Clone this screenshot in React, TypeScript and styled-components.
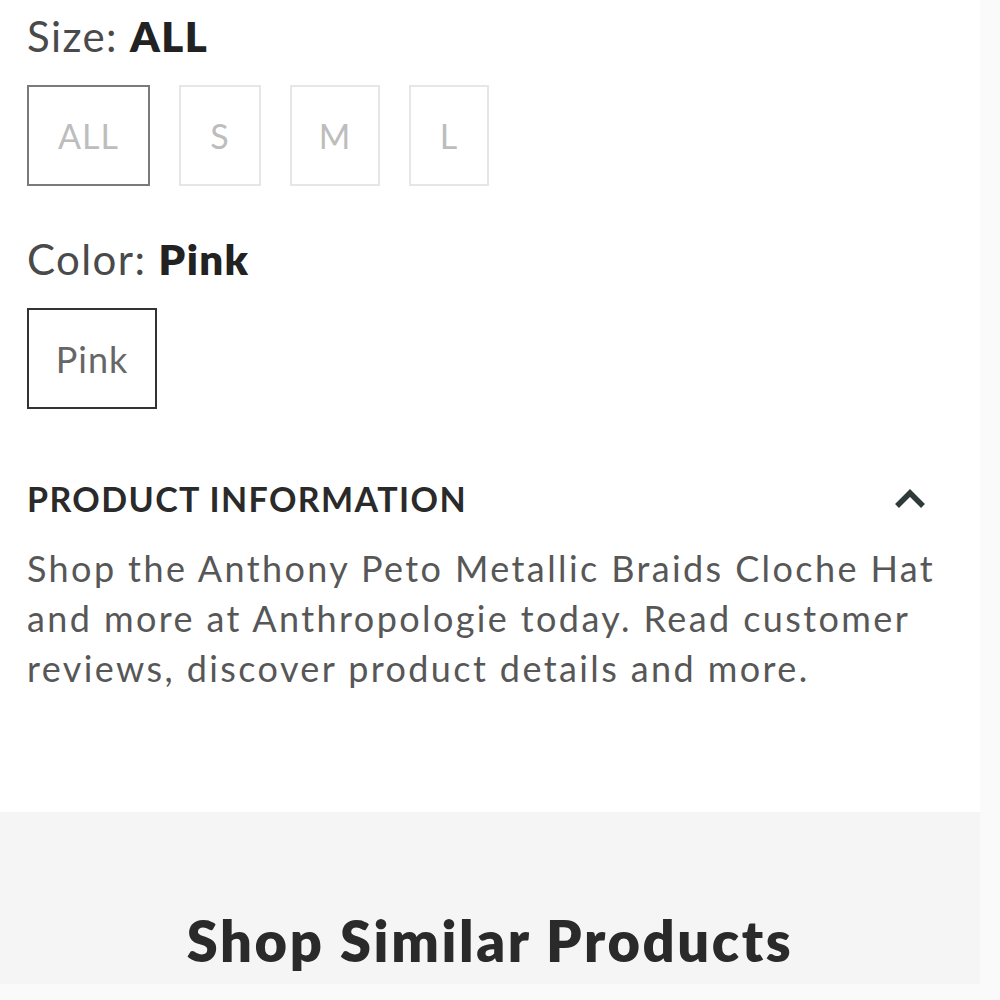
import React from "react";
import styled, { createGlobalStyle } from "styled-components";

const Global = createGlobalStyle`
  html, body { margin: 0; padding: 0; background: #fafafa; }
  body { font-family: Lato, "Open Sans", sans-serif; }
`;

const Page = styled.div`
  width: 980px;
  display: flex;
  flex-direction: column;
`;

const Panel = styled.div`
  background: #fff;
  padding: 11px 0 0 27px;
  height: 812px;
  box-sizing: border-box;
  display: flex;
  flex-direction: column;
`;

const Label = styled.div`
  font-size: 42px;
  line-height: 50px;
  color: #4a4a4a;
  letter-spacing: 1.4px;
  b { color: #222; font-weight: 800; }
`;

const OptionRow = styled.div`
  display: flex;
  gap: 29px;
  margin-top: 24px;
`;

const Option = styled.div<{ $w: number; $selected?: boolean; $dark?: boolean }>`
  width: ${(p) => p.$w}px;
  height: 101px;
  box-sizing: border-box;
  border: 2px solid ${(p) => (p.$dark ? "#333" : p.$selected ? "#7a7a7a" : "#e6e6e6")};
  display: flex;
  align-items: center;
  justify-content: center;
  font-size: ${(p) => (p.$dark ? 36 : 34)}px;
  color: ${(p) => (p.$dark ? "#666" : "#bdbdbd")};
  letter-spacing: 1px;
`;

const ColorLabel = styled(Label)`
  margin-top: 48px;
`;

const InfoHeader = styled.div`
  display: flex;
  align-items: center;
  justify-content: space-between;
  margin-top: 70px;
  padding-right: 53px;
  height: 40px;
`;

const InfoTitle = styled.div`
  font-size: 34px;
  line-height: 40px;
  font-weight: 700;
  color: #2a2a2a;
  letter-spacing: 1.4px;
`;

const Paragraph = styled.p`
  margin: 24px 0 0;
  font-size: 36px;
  line-height: 50px;
  color: #575757;
  letter-spacing: 2.4px;
  max-width: 930px;
`;

const Similar = styled.div`
  background: #f5f5f5;
  height: 172px;
  display: flex;
  align-items: flex-end;
  justify-content: center;
  padding-bottom: 10px;
  box-sizing: border-box;
`;

const SimilarTitle = styled.h2`
  margin: 0;
  font-size: 56px;
  line-height: 1.2;
  font-weight: 800;
  color: #2a2a2a;
  letter-spacing: 2.6px;
`;

export default function App() {
  return (
    <>
      <Global />
      <Page>
        <Panel>
          <Label>
            Size: <b>ALL</b>
          </Label>
          <OptionRow>
            <Option $w={123} $selected>ALL</Option>
            <Option $w={82}>S</Option>
            <Option $w={90}>M</Option>
            <Option $w={80}>L</Option>
          </OptionRow>
          <ColorLabel>
            Color: <b>Pink</b>
          </ColorLabel>
          <OptionRow>
            <Option $w={130} $dark>Pink</Option>
          </OptionRow>
          <InfoHeader>
            <InfoTitle>PRODUCT INFORMATION</InfoTitle>
            <svg width="34" height="22" viewBox="0 0 34 22">
              <path d="M4 18 L17 5 L30 18" fill="none" stroke="#2f3b3b" strokeWidth="5.5" strokeLinejoin="miter" />
            </svg>
          </InfoHeader>
          <Paragraph>
            Shop the Anthony Peto Metallic Braids Cloche Hat and more at Anthropologie today. Read customer reviews, discover product details and more.
          </Paragraph>
        </Panel>
        <Similar>
          <SimilarTitle>Shop Similar Products</SimilarTitle>
        </Similar>
      </Page>
    </>
  );
}
